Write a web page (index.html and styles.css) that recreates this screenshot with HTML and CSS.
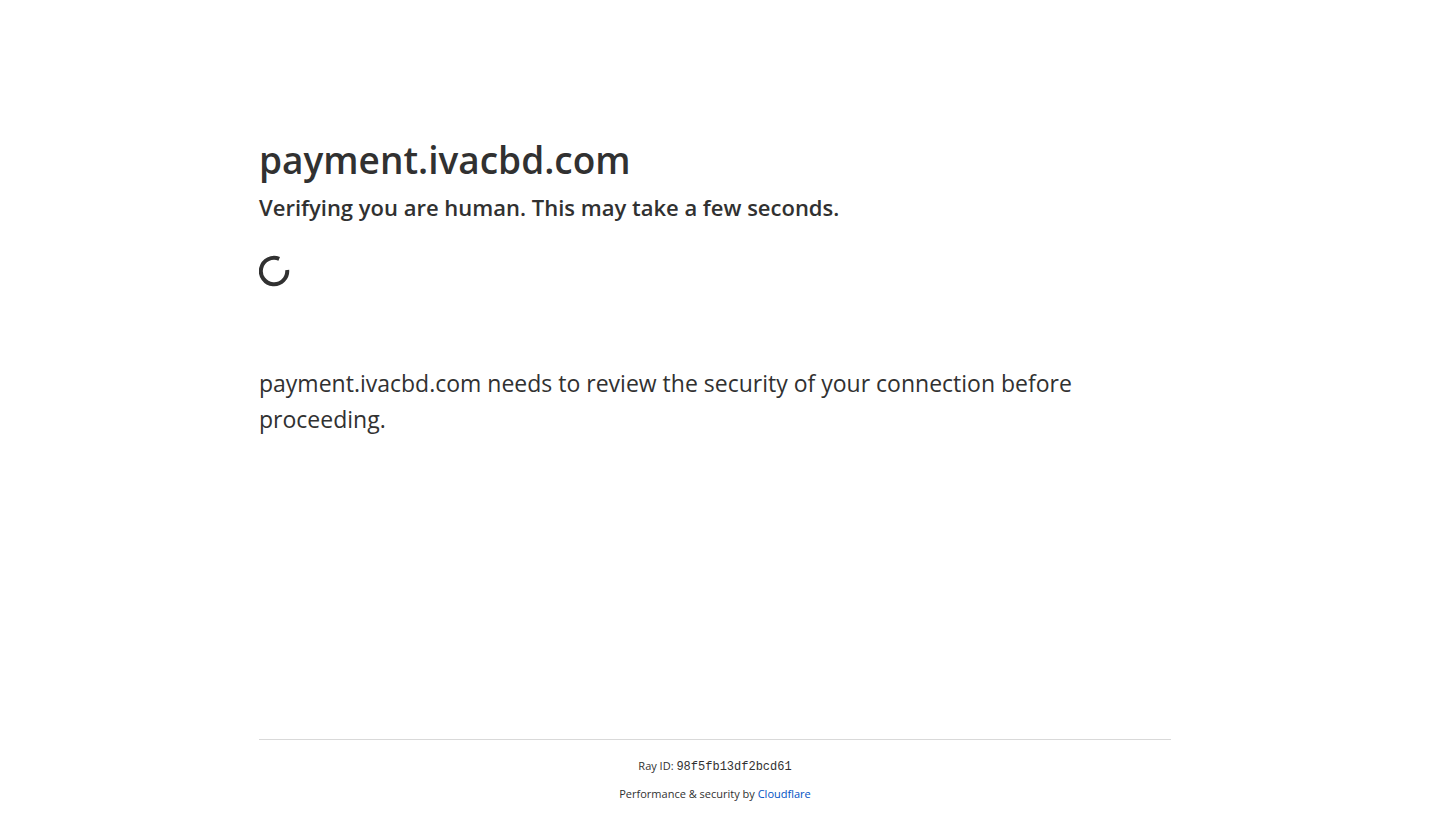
FILE: index.html
```html
<!DOCTYPE html>
<html lang="en">
<head>
<meta charset="utf-8">
<meta name="viewport" content="width=device-width, initial-scale=1">
<title>Just a moment...</title>
<link rel="stylesheet" href="styles.css">
</head>
<body>
<main class="main">
  <h1 class="title">payment.ivacbd.com</h1>
  <p class="status">Verifying you are human. This may take a few seconds.</p>
  <div class="loading" role="status" aria-label="Loading">
    <svg class="spinner" viewBox="0 0 32 32" aria-hidden="true"><path d="M20.2 3.9A13.2 13.2 0 1 0 28.2 15"/></svg>
  </div>
  <p class="message">payment.ivacbd.com needs to review the security of your connection before proceeding.</p>
</main>
<footer class="footer">
  <div class="footer-inner">
    <div>Ray ID: <code class="ray">98f5fb13df2bcd61</code></div>
    <div>Performance &amp; security by <a class="link" href="#">Cloudflare</a></div>
  </div>
</footer>
</body>
</html>
```
FILE: styles.css
```css
* {
  box-sizing: border-box;
  margin: 0;
  padding: 0;
}

body {
  display: flex;
  flex-direction: column;
  min-height: 100vh;
  background: #fff;
  color: #313131;
  font-family: "Segoe UI", "Open Sans", "Noto Sans", sans-serif;
}

.main,
.footer {
  width: 100%;
  max-width: 960px;
  margin: 0 auto;
  padding: 0 24px;
}

.main {
  flex: 1;
  padding-top: 130px;
}

.title {
  font-size: 37px;
  line-height: 60px;
  font-weight: 600;
}

.status {
  font-size: 22px;
  line-height: 34px;
  font-weight: 600;
}

.loading {
  height: 92px;
  margin: 31px 0 18px;
}

.spinner {
  display: block;
  width: 32px;
  height: 32px;
  fill: none;
  stroke: #313131;
  stroke-width: 4;
}

.message {
  font-size: 23px;
  line-height: 36px;
}

.footer-inner {
  display: flex;
  flex-direction: column;
  gap: 10px;
  padding: 17px 0 15px;
  border-top: 1px solid #d9d9d9;
  font-size: 11px;
  line-height: 18px;
  text-align: center;
}

.ray {
  font-family: "Liberation Mono", monospace;
  font-size: 12px;
  line-height: 1;
}

.link {
  color: #0051c3;
  text-decoration: none;
}
```
